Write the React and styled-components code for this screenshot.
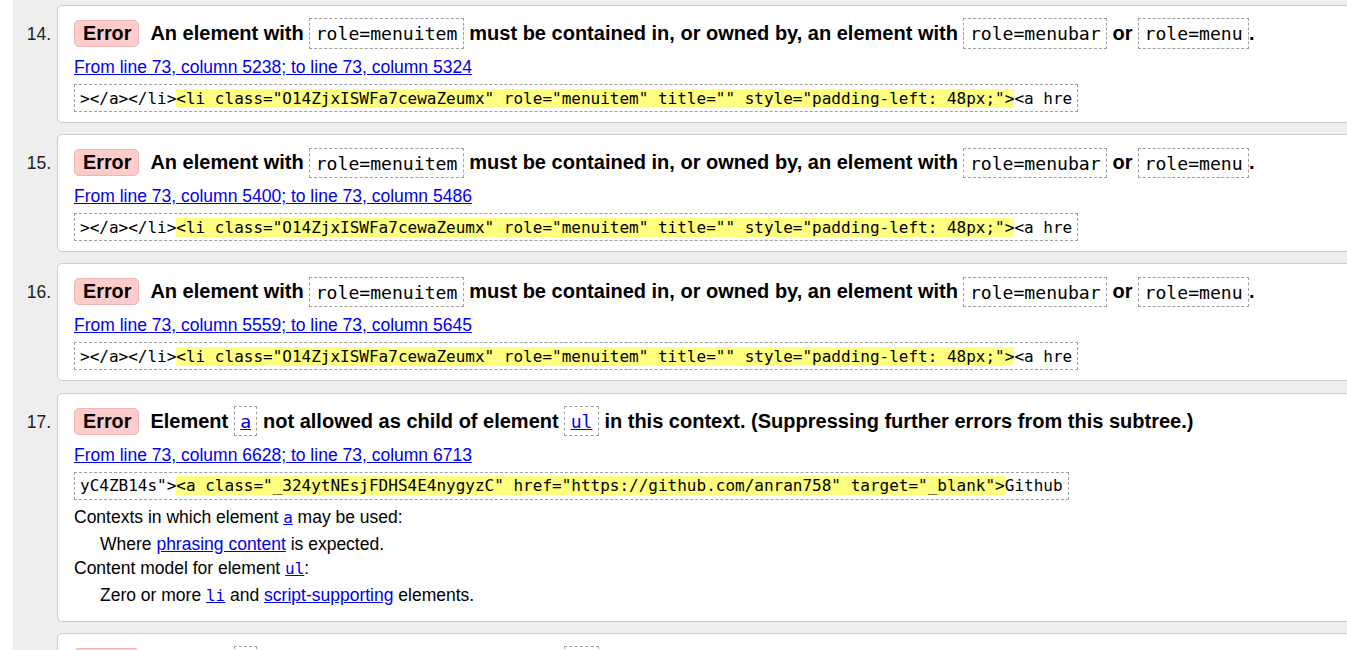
import React from 'react'
import styled, { createGlobalStyle } from 'styled-components'

const GlobalStyle = createGlobalStyle`
  html, body {
    margin: 0;
    overflow: hidden;
    background: #fff;
  }
  body {
    font-family: "Liberation Sans", Arial, sans-serif;
    color: #000;
  }
`

const Page = styled.div`
  margin-left: 13px;
  width: 1400px;
  min-height: 650px;
  padding-top: 5px;
  background: #eee;
`

const List = styled.ol`
  list-style: none;
  margin: 0;
  padding: 0;
  display: flex;
  flex-direction: column;
  gap: 11.2px;
`

const Item = styled.li`
  display: flex;
  align-items: flex-start;
`

const Num = styled.span`
  flex-shrink: 0;
  box-sizing: border-box;
  width: 44px;
  padding-right: 6px;
  margin-top: 19px;
  text-align: right;
  font-size: 17.5px;
  line-height: 20px;
  color: #222;
`

const Card = styled.div`
  flex: 1;
  background: #fff;
  border: 1px solid #ccc;
  border-radius: 5px;
  padding: 12px 16px 10px;
`

const Heading = styled.div`
  display: flex;
  align-items: baseline;
  gap: 11px;
  font-size: 20px;
  font-weight: bold;
  line-height: 30px;
  white-space: nowrap;
`

const Badge = styled.strong`
  padding: 1px 7px 1px 8px;
  line-height: 23px;
  font-size: 19.8px;
  background: #fcc;
  border: 1px solid #ecb6b6;
  border-radius: 5px;
`

const Message = styled.p`
  margin: 0;
`

const Code = styled.code`
  font-family: "DejaVu Sans Mono", monospace;
  font-size: 0.905em;
  font-weight: normal;
  padding: 0.2em 0.3em;
  border: 1px dashed #a0a0a0;
`

const Mono = styled.code`
  font-family: "DejaVu Sans Mono", monospace;
  font-size: 0.91em;
`

const Link = styled.a`
  color: #0000ee;
  text-decoration: underline;
  cursor: pointer;
`

const Location = styled.p`
  margin: 6px 0 5px;
  font-size: 17.5px;
  line-height: 24px;
`

const Extract = styled.code`
  display: block;
  width: fit-content;
  font-family: "DejaVu Sans Mono", monospace;
  font-size: 16px;
  line-height: 19px;
  padding: 3.5px 5px;
  border: 1px dashed #a0a0a0;
  white-space: pre;
`

const Mark = styled.mark`
  background: #ffff80;
  color: inherit;
`

const Details = styled.dl`
  margin: 5px 0 3px;
  font-size: 17.5px;
  line-height: 24px;
`

const Term = styled.dt`
  margin: 0;
`

const Desc = styled.dd`
  margin: 2px 0 0 26px;
`

const menuitemMsg = (
  <>
    An element with <Code>role=menuitem</Code> must be contained in, or owned by, an element with{' '}
    <Code>role=menubar</Code> or <Code>role=menu</Code>.
  </>
)

const menuitemExtract = {
  before: '></a></li>',
  hl: '<li class="O14ZjxISWFa7cewaZeumx" role="menuitem" title="" style="padding-left: 48px;">',
  after: '<a hre',
}

const anchorMsg = (
  <>
    Element <Code><Link>a</Link></Code> not allowed as child of element <Code><Link>ul</Link></Code> in this
    context. (Suppressing further errors from this subtree.)
  </>
)

const anchorDetails = (
  <Details>
    <Term>
      Contexts in which element <Link><Mono>a</Mono></Link> may be used:
    </Term>
    <Desc>
      Where <Link>phrasing content</Link> is expected.
    </Desc>
    <Term>
      Content model for element <Link><Mono>ul</Mono></Link>:
    </Term>
    <Desc>
      Zero or more <Link><Mono>li</Mono></Link> and <Link>script-supporting</Link> elements.
    </Desc>
  </Details>
)

const messages = [
  { n: 14, msg: menuitemMsg, loc: 'From line 73, column 5238; to line 73, column 5324', extract: menuitemExtract },
  { n: 15, msg: menuitemMsg, loc: 'From line 73, column 5400; to line 73, column 5486', extract: menuitemExtract },
  { n: 16, msg: menuitemMsg, loc: 'From line 73, column 5559; to line 73, column 5645', extract: menuitemExtract },
  {
    n: 17,
    msg: anchorMsg,
    loc: 'From line 73, column 6628; to line 73, column 6713',
    extract: {
      before: 'yC4ZB14s">',
      hl: '<a class="_324ytNEsjFDHS4E4nygyzC" href="https://github.com/anran758" target="_blank">',
      after: 'Github',
    },
    details: anchorDetails,
  },
  {
    n: 18,
    msg: anchorMsg,
    loc: 'From line 73, column 6790; to line 73, column 6873',
    extract: {
      before: 'ithub</a><',
      hl: '<a class="_324ytNEsjFDHS4E4nygyzC" href="https://anran758.github.io" target="_blank">',
      after: 'Blog',
    },
    details: anchorDetails,
  },
]

function ErrorItem({ item }) {
  return (
    <Item>
      <Num>{item.n}.</Num>
      <Card>
        <Heading>
          <Badge>Error</Badge>
          <Message>{item.msg}</Message>
        </Heading>
        <Location>
          <Link>{item.loc}</Link>
        </Location>
        <Extract>
          {item.extract.before}
          <Mark>{item.extract.hl}</Mark>
          {item.extract.after}
        </Extract>
        {item.details}
      </Card>
    </Item>
  )
}

export default function App() {
  return (
    <>
      <GlobalStyle />
      <Page>
        <List>
          {messages.map(item => (
            <ErrorItem key={item.n} item={item} />
          ))}
        </List>
      </Page>
    </>
  )
}
